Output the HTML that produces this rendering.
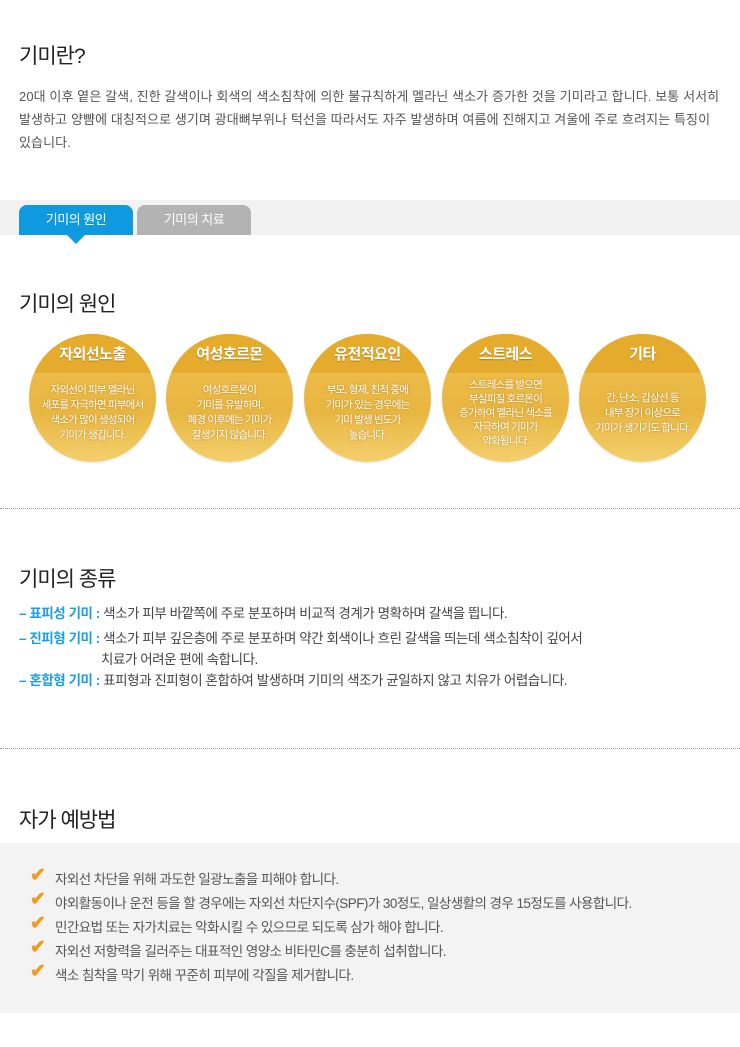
<!DOCTYPE html>
<html><head><meta charset="utf-8"><style>
*{margin:0;padding:0;box-sizing:border-box}
body{width:740px;height:1047px;background:#fff;font-family:"Liberation Sans","Noto Sans CJK KR",sans-serif;color:#555;position:relative;overflow:hidden;letter-spacing:-0.5px}
.abs{position:absolute}
h2{position:absolute;left:19px;font-size:21px;font-weight:normal;color:#222;letter-spacing:-1px}
.p{left:19px;top:85px;width:730px;font-size:13px;line-height:23px;color:#555;letter-spacing:0.1px;white-space:nowrap}
.band{left:0;top:200px;width:740px;height:35px;background:#f2f2f2}
.tab{top:205px;height:30px;border-radius:8px 8px 0 0;color:#fff;font-size:13px;text-align:center;line-height:30px}
.c{top:334px;width:127px;height:128px;border-radius:50%;overflow:hidden;background:linear-gradient(#f0c050,#e8b640 60%,#f3cf6c);box-shadow:0 1px 2px rgba(0,0,0,.1)}
.c .t{height:39px;background:#e4ab2c;color:#fff;font-size:15px;text-align:center;line-height:42px;font-weight:bold;text-shadow:0 1px 1px rgba(0,0,0,.25)}
.c .b{display:flex;align-items:center;justify-content:center;height:80px;color:#fff;font-size:10.5px;line-height:15px;text-align:center;letter-spacing:-0.8px;text-shadow:0 0 2px rgba(150,90,0,.6)}
.dot{left:0;width:740px;border-top:1px dotted #999}
.k{font-size:13.5px;line-height:21px;left:19px;color:#444;letter-spacing:-0.45px;white-space:nowrap}
.k b{color:#1a9ee0;font-weight:bold}
.box{left:0;top:843px;width:740px;height:170px;background:#f3f3f3}
.li{left:55px;font-size:13.5px;color:#555;letter-spacing:-0.55px;white-space:nowrap}
.ck{left:30px;color:#f39a1e;font-size:19px;font-weight:bold}
</style></head><body>
<h2 style="top:40px">기미란?</h2>
<div class="abs p">20대 이후 옅은 갈색, 진한 갈색이나 회색의 색소침착에 의한 불규칙하게 멜라닌 색소가 증가한 것을 기미라고 합니다. 보통 서서히<br>발생하고 양뺨에 대칭적으로 생기며 광대뼈부위나 턱선을 따라서도 자주 발생하며 여름에 진해지고 겨울에 주로 흐려지는 특징이<br>있습니다.</div>
<div class="abs band"></div>
<div class="abs tab" style="left:19px;width:114px;background:#0f9ae0">기미의 원인</div>
<div class="abs" style="left:67px;top:235px;width:0;height:0;border-left:9px solid transparent;border-right:9px solid transparent;border-top:9px solid #0f9ae0"></div>
<div class="abs tab" style="left:137px;width:114px;background:#b3b3b3">기미의 치료</div>
<h2 style="top:288px">기미의 원인</h2>
<div class="abs c" style="left:29px"><div class="t">자외선노출</div><div class="b">자외선이 피부 멜라닌<br>세포를 자극하면 피부에서<br>색소가 많이 생성되어<br>기미가 생깁니다.</div></div>
<div class="abs c" style="left:166px"><div class="t">여성호르몬</div><div class="b">여성호르몬이<br>기미를 유발하며,<br>폐경 이후에는 기미가<br>잘생기지 않습니다.</div></div>
<div class="abs c" style="left:304px"><div class="t">유전적요인</div><div class="b">부모, 형제, 친척 중에<br>기미가 있는 경우에는<br>기미 발생 빈도가<br>높습니다.</div></div>
<div class="abs c" style="left:442px"><div class="t">스트레스</div><div class="b" style="line-height:14px">스트레스를 받으면<br>부실피질 호르몬이<br>증가하여 멜라닌 색소를<br>자극하여 기미가<br>악화됩니다.</div></div>
<div class="abs c" style="left:579px"><div class="t">기타</div><div class="b">간, 난소, 갑상선 등<br>내부 장기 이상으로<br>기미가 생기기도 합니다.</div></div>
<div class="abs dot" style="top:508px"></div>
<h2 style="top:563px">기미의 종류</h2>
<div class="abs k" style="top:603px"><b>– 표피성 기미 :</b> 색소가 피부 바깥쪽에 주로 분포하며 비교적 경계가 명확하며 갈색을 띕니다.</div>
<div class="abs k" style="top:628px"><b>– 진피형 기미 :</b> 색소가 피부 깊은층에 주로 분포하며 약간 회색이나 흐린 갈색을 띄는데 색소침착이 깊어서<br><span style="padding-left:82px">치료가 어려운 편에 속합니다.</span></div>
<div class="abs k" style="top:670px"><b>– 혼합형 기미 :</b> 표피형과 진피형이 혼합하여 발생하며 기미의 색조가 균일하지 않고 치유가 어렵습니다.</div>
<div class="abs dot" style="top:748px"></div>
<h2 style="top:804px">자가 예방법</h2>
<div class="abs box"></div>
<div class="abs ck" style="top:864px">✔</div><div class="abs li" style="top:868px">자외선 차단을 위해 과도한 일광노출을 피해야 합니다.</div>
<div class="abs ck" style="top:888px">✔</div><div class="abs li" style="top:892px">야외활동이나 운전 등을 할 경우에는 자외선 차단지수(SPF)가 30정도, 일상생활의 경우 15정도를 사용합니다.</div>
<div class="abs ck" style="top:912px">✔</div><div class="abs li" style="top:916px">민간요법 또는 자가치료는 악화시킬 수 있으므로 되도록 삼가 해야 합니다.</div>
<div class="abs ck" style="top:936px">✔</div><div class="abs li" style="top:940px">자외선 저항력을 길러주는 대표적인 영양소 비타민C를 충분히 섭취합니다.</div>
<div class="abs ck" style="top:960px">✔</div><div class="abs li" style="top:964px">색소 침착을 막기 위해 꾸준히 피부에 각질을 제거합니다.</div>
</body></html>
